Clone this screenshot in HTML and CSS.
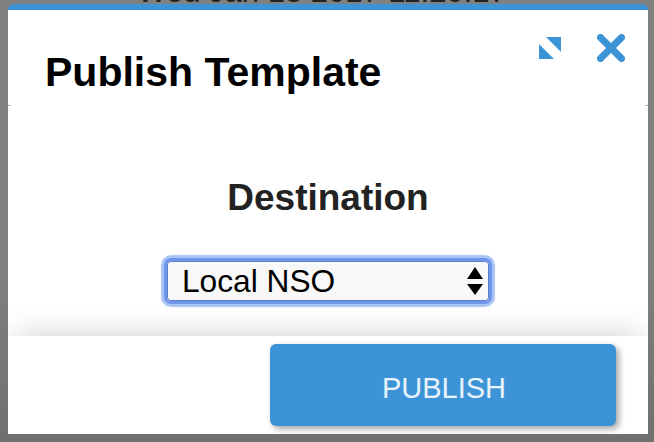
FILE: index.html
```html
<!DOCTYPE html>
<html lang="en">
<head>
<meta charset="utf-8">
<title>Publish Template</title>
<link rel="stylesheet" href="styles.css">
</head>
<body>
<div class="behind">Wed Jan 18 2017 11:20:17</div>
<div class="modal">
  <header class="modal-head">
    <h1 class="title">Publish Template</h1>
    <div class="tools">
      <svg class="icon-expand" width="24" height="24" viewBox="0 0 24 24"><path class="ico" d="M8 1H23V16Z"/><path class="ico" d="M1 8V23H16Z"/></svg>
      <svg class="icon-close" width="28" height="28" viewBox="0 0 28 28"><path class="ico-x" d="M3.5 3.5L24.5 24.5M24.5 3.5L3.5 24.5"/></svg>
    </div>
  </header>
  <main class="modal-body">
    <h2 class="dest">Destination</h2>
    <div class="select-box">
      <span class="select-value">Local NSO</span>
      <svg width="16" height="28" viewBox="0 0 16 28"><path class="arrows" d="M8 0L16 12H0ZM0 17H16L8 28Z"/></svg>
    </div>
  </main>
  <footer class="modal-foot">
    <button class="publish" type="button">PUBLISH</button>
  </footer>
</div>
</body>
</html>
```
FILE: styles.css
```css
html, body {
  margin: 0;
  height: 442px;
  overflow: hidden;
}
body {
  background: linear-gradient(#808080 0, #808080 60%, #707070 100%);
  font-family: "Liberation Sans", Arial, sans-serif;
  padding: 4px 6px 8px 8px;
  box-sizing: border-box;
}
.behind {
  position: absolute;
  top: -24px;
  left: 0;
  width: 644px;
  text-align: center;
  font-size: 31px;
  line-height: 31px;
  color: #222;
}
.modal {
  position: relative;
  width: 640px;
  height: 430px;
  background: #fff;
  border-top: 6px solid #3c93d5;
  border-radius: 6px 6px 0 0;
  box-sizing: border-box;
  display: flex;
  flex-direction: column;
  overflow: hidden;
}
.modal-head {
  height: 96px;
  flex: none;
  box-sizing: border-box;
  display: flex;
  justify-content: space-between;
  padding: 0 23px 0 37px;
  border-bottom: 1px solid transparent;
  border-image: linear-gradient(to right, #777 0, #999 2px, transparent 4px, transparent calc(100% - 4px), #999 calc(100% - 2px), #777 100%) 1;
}
.title {
  margin: 39px 0 0;
  font-size: 41px;
  line-height: 47px;
  font-weight: 700;
  color: #000;
}
.tools {
  display: flex;
  gap: 35px;
  align-items: flex-start;
  padding-top: 24px;
}
.icon-expand { margin-top: 2px; }
.ico { fill: #3c93d5; }
.ico-x {
  fill: none;
  stroke: #3c93d5;
  stroke-width: 7px;
  stroke-linecap: round;
}
.modal-body {
  flex: 1;
  display: flex;
  flex-direction: column;
  align-items: center;
}
.dest {
  margin: 71px 0 0;
  font-size: 37px;
  line-height: 42px;
  font-weight: 700;
  color: #222;
}
.select-box {
  margin-top: 39px;
  width: 328px;
  height: 46px;
  box-sizing: border-box;
  display: flex;
  align-items: center;
  justify-content: space-between;
  padding: 0 6px 0 15px;
  background: #f8f8f8;
  border: 3px solid #6d96ec;
  border-radius: 7px;
  box-shadow: inset 0 0 0 1px #6080c4, 0 0 1px 3px #a9c4f5;
  font-size: 31.7px;
  color: #000;
}
.arrows { fill: #000; }
.modal-foot {
  flex: none;
  height: 98px;
  box-sizing: border-box;
  display: flex;
  justify-content: flex-end;
  padding: 8px 32px 8px 0;
  background: #fff;
  box-shadow: 0 -8px 32px -8px rgba(0,0,0,.2);
}
.publish {
  width: 346px;
  height: 82px;
  border: 0;
  border-radius: 6px;
  padding: 6px 0 0 2px;
  background: #3c93d5;
  color: #e8f3fb;
  font-family: inherit;
  font-size: 29px;
  box-shadow: 3px 3px 6px rgba(0,0,0,.35);
}
```
